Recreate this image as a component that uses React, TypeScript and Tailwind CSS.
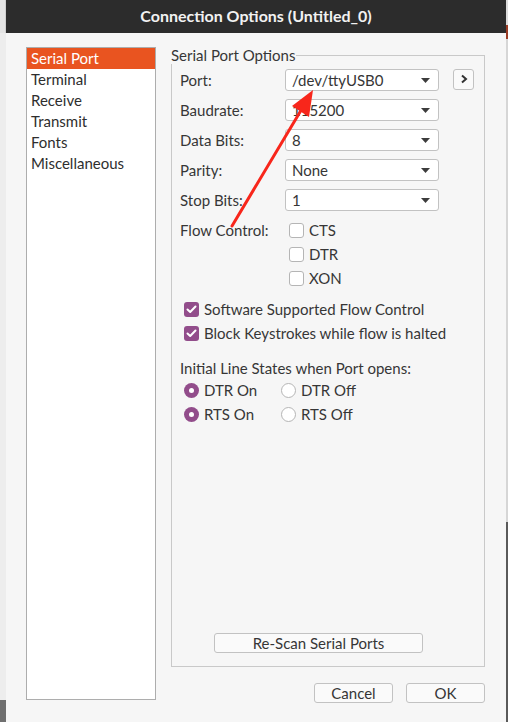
import type { ReactNode } from 'react';

const font = { fontFamily: 'Lato, "Noto Sans", sans-serif' };

function Combo({ value }: { value: string }) {
  return (
    <div className="w-[154px] h-[22px] flex items-center justify-between rounded-[3px] border border-[#c2c2c2] bg-white pl-[6px] pr-[8px]">
      <span className="text-[15px] leading-none text-[#363636]">{value}</span>
      <svg width="9" height="5" viewBox="0 0 9 5">
        <path d="M0 0 L9 0 L4.5 5 Z" fill="#3c3c3c" />
      </svg>
    </div>
  );
}

function FieldRow({ label, children }: { label: string; children: ReactNode }) {
  return (
    <div className="flex items-center h-[22px]">
      <span className="w-[105px] text-[15px] text-[#363636]">{label}</span>
      {children}
    </div>
  );
}

function CheckBox({ checked, label }: { checked?: boolean; label: string }) {
  return (
    <div className="flex items-center h-[24px] gap-[5px]">
      {checked ? (
        <span className="w-[15px] h-[15px] rounded-[3px] bg-[#924d8b] flex items-center justify-center">
          <svg width="11" height="9" viewBox="0 0 11 9">
            <path d="M1.5 4.5 L4.2 7 L9.5 1.5" fill="none" stroke="white" strokeWidth="2" strokeLinecap="round" strokeLinejoin="round" />
          </svg>
        </span>
      ) : (
        <span className="w-[15px] h-[15px] rounded-[3px] border border-[#b5b5b5] bg-white" />
      )}
      <span className="text-[15px] text-[#363636]">{label}</span>
    </div>
  );
}

function Radio({ checked, label }: { checked?: boolean; label: string }) {
  return (
    <div className="flex items-center h-[24px] gap-[5px]">
      {checked ? (
        <span className="w-[15px] h-[15px] rounded-full bg-[#924d8b] flex items-center justify-center">
          <span className="w-[5px] h-[5px] rounded-full bg-white" />
        </span>
      ) : (
        <span className="w-[15px] h-[15px] rounded-full border border-[#b5b5b5] bg-white" />
      )}
      <span className="text-[15px] text-[#363636]">{label}</span>
    </div>
  );
}

const pages = ['Serial Port', 'Terminal', 'Receive', 'Transmit', 'Fonts', 'Miscellaneous'];

export default function App() {
  return (
    <div className="relative w-[508px] h-[722px] flex overflow-hidden bg-[#ececec]" style={font}>
      <div className="w-[6px] h-full flex flex-col">
        <div className="h-[33px] bg-[#e4e4e4] border-r border-[#cfcfcf]" />
        <div className="flex-1 bg-[#ededed]" />
        <div className="h-[22px] bg-[#6f6f6f]" />
      </div>

      <div className="w-[500px] h-full flex flex-col bg-[#f6f6f6]">
        <div className="h-[33px] bg-[#2c2c2c] flex items-center justify-center pb-[2px]">
          <span className="text-[16px] font-bold text-[#f2f2f2]">Connection Options (Untitled_0)</span>
        </div>

        <div className="flex pl-[20px] pt-[14px]">
          <div className="w-[130px] h-[653px] border border-[#adadad] bg-white">
            {pages.map((p, i) => (
              <div
                key={p}
                className={
                  i === 0
                    ? 'h-[21px] flex items-center pl-[4px] bg-[#e95420] text-white text-[15px]'
                    : 'h-[21px] flex items-center pl-[4px] text-[#2e2e2e] text-[15px]'
                }
              >
                {p}
              </div>
            ))}
          </div>

          <div className="ml-[15px] w-[314px] pt-[8px] flex flex-col">
            <div className="relative h-[612px] border border-[#c9c9c9] flex flex-col pl-[8px] pt-[13px]">
              <span className="absolute -top-[10px] -left-px bg-[#f6f6f6] pr-[1px] text-[15px] leading-[18px] text-[#363636]">
                Serial Port Options
              </span>

              <div className="flex flex-col gap-[8px]">
                <div className="flex items-center">
                  <FieldRow label="Port:">
                    <Combo value="/dev/ttyUSB0" />
                  </FieldRow>
                  <div className="ml-[14px] -mt-[2px] w-[21px] h-[21px] rounded-[3px] border border-[#c2c2c2] bg-[#fafafa] flex items-center justify-center">
                    <svg width="8" height="10" viewBox="0 0 8 10">
                      <path d="M2 1.5 L6 5 L2 8.5" fill="none" stroke="#333" strokeWidth="2" />
                    </svg>
                  </div>
                </div>
                <FieldRow label="Baudrate:">
                  <Combo value="115200" />
                </FieldRow>
                <FieldRow label="Data Bits:">
                  <Combo value="8" />
                </FieldRow>
                <FieldRow label="Parity:">
                  <Combo value="None" />
                </FieldRow>
                <FieldRow label="Stop Bits:">
                  <Combo value="1" />
                </FieldRow>
              </div>

              <div className="flex mt-[7px]">
                <span className="w-[109px] h-[24px] flex items-center text-[15px] text-[#363636]">Flow Control:</span>
                <div className="flex flex-col">
                  <CheckBox label="CTS" />
                  <CheckBox label="DTR" />
                  <CheckBox label="XON" />
                </div>
              </div>

              <div className="flex flex-col mt-[7px] pl-[4px]">
                <CheckBox checked label="Software Supported Flow Control" />
                <CheckBox checked label="Block Keystrokes while flow is halted" />
              </div>

              <div className="mt-[13px] h-[20px] flex items-center text-[15px] text-[#363636]">
                Initial Line States when Port opens:
              </div>
              <div className="grid grid-cols-[97px_auto] pl-[4px]">
                <Radio checked label="DTR On" />
                <Radio label="DTR Off" />
                <Radio checked label="RTS On" />
                <Radio label="RTS Off" />
              </div>

              <div className="flex-1" />
              <div className="ml-[34px] mb-[13px] w-[209px] h-[20px] rounded-[3px] border border-[#c2c2c2] bg-[#fafafa] flex items-center justify-center text-[15px] text-[#363636]">
                Re-Scan Serial Ports
              </div>
            </div>

            <div className="mt-[16px] flex justify-end gap-[13px]">
              <div className="w-[79px] h-[20px] rounded-[3px] border border-[#c2c2c2] bg-[#fafafa] flex items-center justify-center text-[15px] text-[#363636]">
                Cancel
              </div>
              <div className="w-[79px] h-[20px] rounded-[3px] border border-[#c2c2c2] bg-[#fafafa] flex items-center justify-center text-[15px] text-[#363636]">
                OK
              </div>
            </div>
          </div>
        </div>
      </div>

      <div className="w-[2px] h-full flex flex-col">
        <div className="h-[25px] bg-[#dcdcdc]" />
        <div className="h-[14px] bg-[#9b3b24]" />
        <div className="flex-1 bg-[#d6d6d6]" />
        <div className="h-[200px] bg-[#5a5a5a]" />
      </div>

      <svg className="absolute inset-0 pointer-events-none" width="508" height="722" viewBox="0 0 508 722">
        <line x1="232" y1="226" x2="303" y2="107" stroke="#f8261b" strokeWidth="3" strokeLinecap="round" />
        <path d="M313 90 L292 106 L309 117 Z" fill="#f8261b" />
      </svg>
    </div>
  );
}
